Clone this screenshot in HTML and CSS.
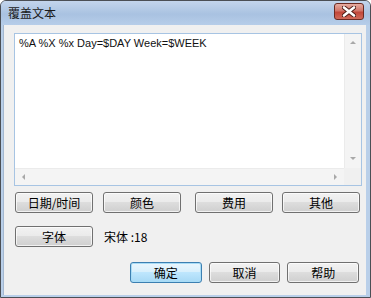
FILE: index.html
```html
<!DOCTYPE html>
<html lang="zh-CN">
<head>
    <meta charset="UTF-8">
    <title>覆盖文本</title>
    <link rel="stylesheet" href="styles.css">
</head>
<body>
    <div class="window">
        <div class="titlebar">
            <span class="title">覆盖文本</span>
            <div class="close-btn">
                <svg width="14" height="11" viewBox="0 0 14 11">
                    <path d="M2 1.5 L12 9.5 M12 1.5 L2 9.5" stroke="#4a1a14" stroke-width="4.4" stroke-linecap="round"/>
                    <path d="M2 1.5 L12 9.5 M12 1.5 L2 9.5" stroke="#fff" stroke-width="2.6" stroke-linecap="round"/>
                </svg>
            </div>
        </div>
        <div class="client">
            <div class="editbox">
                <div class="edit-text">%A %X %x Day=$DAY Week=$WEEK</div>
                <div class="vscroll">
                    <span class="arrow up"></span>
                    <span class="arrow down"></span>
                </div>
                <div class="hscroll">
                    <span class="arrow left"></span>
                    <span class="arrow right"></span>
                </div>
                <div class="corner"></div>
            </div>

            <div class="row row-tags">
                <button class="btn btn-wide">日期/时间</button>
                <button class="btn btn-wide b2">颜色</button>
                <button class="btn btn-wide b3">费用</button>
                <button class="btn btn-wide b4">其他</button>
            </div>

            <div class="row row-font">
                <button class="btn btn-wide">字体</button>
                <span class="font-info">宋体 :18</span>
            </div>

            <div class="row row-actions">
                <button class="btn btn-small default">确定</button>
                <button class="btn btn-small">取消</button>
                <button class="btn btn-small">帮助</button>
            </div>
        </div>
    </div>
</body>
</html>
```

FILE: styles.css
```css
html, body {
    margin: 0;
    padding: 0;
    background: #ffffff;
}
body {
    font-family: "Noto Sans CJK SC", "Liberation Sans", sans-serif;
    font-size: 12px;
    color: #000;
}
.window {
    width: 371px;
    height: 298px;
    box-sizing: border-box;
    border: 1px solid #4b4f55;
    border-radius: 6px 6px 0 0;
    background: #b9cfe9;
    display: flex;
    flex-direction: column;
    padding: 0 4px 2px 2px;
}
.titlebar {
    height: 24px;
    display: flex;
    align-items: center;
    justify-content: space-between;
    background: linear-gradient(#c3d5ec, #a9c2e1 55%, #b6cde9);
    margin: 0 -4px 0 -2px;
    padding: 0 6px 0 7px;
    border-radius: 5px 5px 0 0;
}
.title {
    font-size: 12px;
    color: #1a1a1a;
    margin-top: -2px;
}
.close-btn {
    width: 28px;
    height: 15px;
    border: 1px solid #6b2a22;
    border-radius: 3px;
    background: linear-gradient(#e6aca1, #d2766a 45%, #c2473a 55%, #d06a5a);
    display: flex;
    align-items: center;
    justify-content: center;
    margin-top: -3px;
}
.client {
    flex: 1;
    background: #f0f0f0;
    border-left: 1px solid #a4b8d0;
    padding: 8px 0 0 10px;
    display: flex;
    flex-direction: column;
}
.editbox {
    width: 348px;
    height: 153px;
    box-sizing: border-box;
    border: 1px solid #a7c4e3;
    background: #fff;
    display: grid;
    grid-template-columns: 1fr 17px;
    grid-template-rows: 1fr 17px;
}
.edit-text {
    font-family: "Liberation Sans", sans-serif;
    font-size: 11px;
    padding: 3px 0 0 4px;
    color: #111;
}
.vscroll {
    background: #f4f4f4;
    border-left: 1px solid #ebebeb;
    display: flex;
    flex-direction: column;
    justify-content: space-between;
    align-items: center;
    padding: 7px 0 8px;
}
.hscroll {
    background: #f4f4f4;
    border-top: 1px solid #ebebeb;
    display: flex;
    justify-content: space-between;
    align-items: center;
    padding: 0 7px 0 7px;
}
.corner {
    background: #f0f0f0;
}
.arrow {
    width: 0;
    height: 0;
    border: 3px solid transparent;
}
.arrow.up {
    border-bottom: 3px solid #a8a8a8;
    border-top-width: 0;
}
.arrow.down {
    border-top: 3px solid #a8a8a8;
    border-bottom-width: 0;
}
.arrow.left {
    border-right: 3px solid #a8a8a8;
    border-left-width: 0;
}
.arrow.right {
    border-left: 3px solid #a8a8a8;
    border-right-width: 0;
}
.row {
    display: flex;
    align-items: center;
}
.row-tags {
    margin-top: 6px;
    padding-left: 1px;
}
.row-font {
    margin-top: 13px;
    padding-left: 1px;
}
.row-actions {
    margin-top: 15px;
    padding-left: 116px;
}
.btn {
    font-family: "Noto Sans CJK SC", "Liberation Sans", sans-serif;
    font-size: 12px;
    height: 21px;
    padding: 0;
    box-sizing: border-box;
    border: 1px solid #707070;
    border-radius: 3px;
    background: linear-gradient(#f2f2f2, #ebebeb 45%, #dddddd 50%, #cfcfcf);
    color: #000;
    line-height: 17px;
    box-shadow: inset 0 0 0 1px rgba(255, 255, 255, 0.7);
}
.btn-wide {
    width: 78px;
}
.btn-small {
    width: 72px;
    margin-right: 7px;
}
.b2 {
    margin-left: 10px;
}
.b3 {
    margin-left: 14px;
}
.b4 {
    margin-left: 9px;
}
.default {
    border-color: #3c7fb1;
    background: linear-gradient(#eaf6fd, #d9f0fc 45%, #bee6fd 50%, #a7d9f5);
    box-shadow: inset 0 0 0 1px #a8dcf6;
}
.font-info {
    margin-left: 11px;
    margin-top: -1px;
}
```
